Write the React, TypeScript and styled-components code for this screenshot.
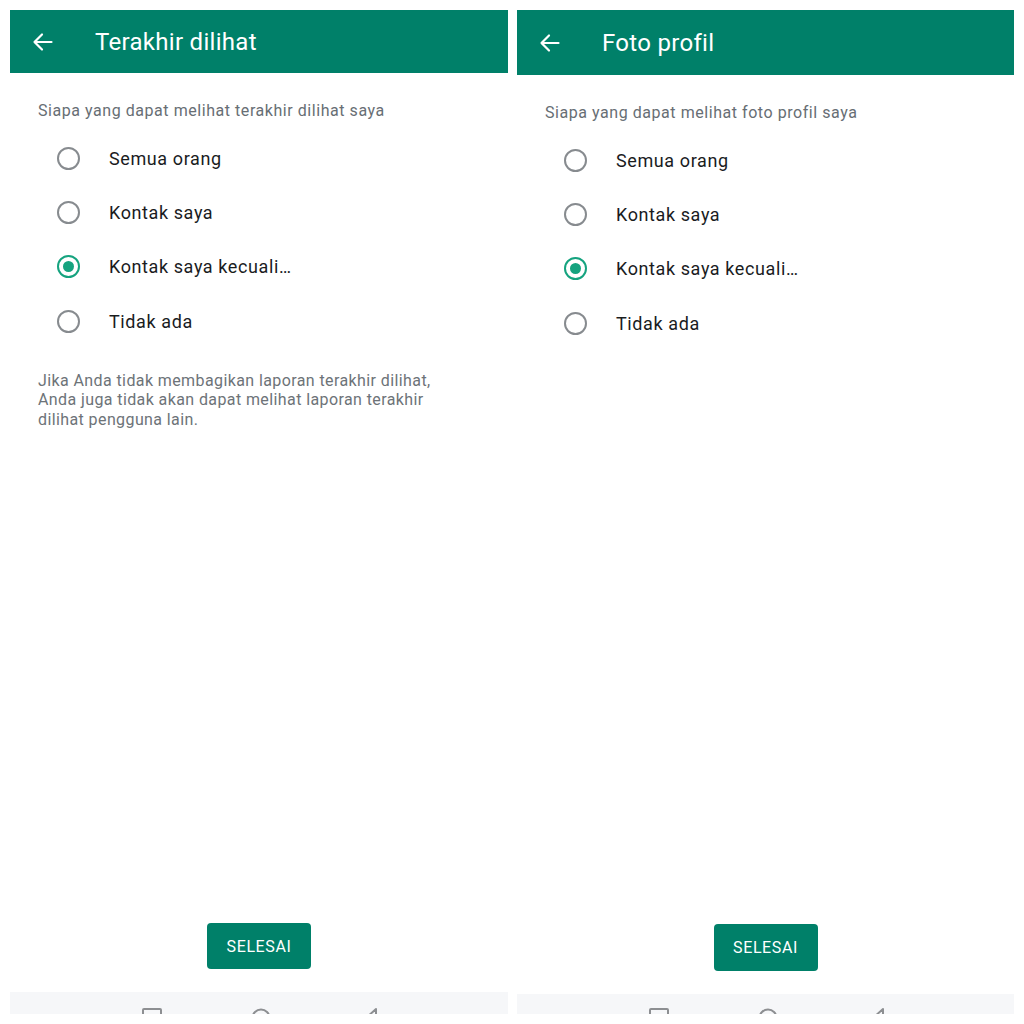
import React from "react";
import styled, { createGlobalStyle } from "styled-components";

const GlobalStyle = createGlobalStyle`
  html, body { margin: 0; padding: 0; background: #ffffff; }
  body { font-family: Roboto, "Noto Sans", Arial, sans-serif; }
  * { box-sizing: border-box; }
`;

const Page = styled.div`
  width: 1024px;
  height: 1024px;
  padding: 10px;
  display: grid;
  grid-template-columns: 498px 497px;
  column-gap: 9px;
  background: #ffffff;
`;

const Panel = styled.section`
  display: flex;
  flex-direction: column;
  height: 100%;
  background: #ffffff;
  overflow: hidden;
`;

const Header = styled.header<{ $h: number }>`
  height: ${(p) => p.$h}px;
  flex: none;
  background: #008069;
  display: flex;
  align-items: center;
  padding-left: 22px;
  gap: 42px;
  color: #ffffff;
`;

const Title = styled.h1`
  margin: 0;
  font-size: 24px;
  font-weight: 400;
  letter-spacing: 0.3px;
  color: #ffffff;
`;

const Body = styled.div<{ $top: number }>`
  flex: 1;
  padding-top: ${(p) => p.$top}px;
  display: flex;
  flex-direction: column;
`;

const Subtitle = styled.p`
  margin: 0;
  padding-left: 28px;
  font-size: 16px;
  line-height: 20px;
  letter-spacing: 0.55px;
  color: #676e74;
`;

const RadioList = styled.div`
  margin-top: 10px;
  display: flex;
  flex-direction: column;
`;

const Row = styled.div`
  height: 54.4px;
  display: flex;
  align-items: center;
  padding-left: 47px;
  gap: 29px;
`;

const Circle = styled.span<{ $on: boolean }>`
  width: 23px;
  height: 23px;
  border-radius: 50%;
  border: 2px solid ${(p) => (p.$on ? "#15a37f" : "#878b8f")};
  display: flex;
  align-items: center;
  justify-content: center;
  flex: none;
`;

const Dot = styled.span`
  width: 11px;
  height: 11px;
  border-radius: 50%;
  background: #15a37f;
`;

const Label = styled.span`
  font-size: 18px;
  color: #1a1c1e;
  letter-spacing: 0.6px;
`;

const Note = styled.p`
  margin: 22px 0 0;
  padding-left: 28px;
  font-size: 16px;
  line-height: 19.5px;
  letter-spacing: 0.4px;
  color: #6d7378;
`;

const Footer = styled.div<{ $gap: number }>`
  display: flex;
  justify-content: center;
  padding-bottom: ${(p) => p.$gap}px;
`;

const Button = styled.button<{ $h: number }>`
  width: 104px;
  height: ${(p) => p.$h}px;
  border: none;
  border-radius: 4px;
  background: #008069;
  color: #ffffff;
  font-family: Roboto, "Noto Sans", Arial, sans-serif;
  font-size: 16px;
  font-weight: 400;
  letter-spacing: 0.6px;
  padding: 0;
`;

const NavBar = styled.div<{ $h: number }>`
  height: ${(p) => p.$h}px;
  flex: none;
  background: #f6f7f9;
  position: relative;
  overflow: hidden;
`;

const NavIcon = styled.svg<{ $x: number }>`
  position: absolute;
  left: ${(p) => p.$x}px;
  bottom: -14px;
`;

const BackArrow = () => (
  <svg width="21" height="20" viewBox="0 0 21 20" fill="none">
    <path d="M19.5 10H2.5M10 2.5L2.5 10L10 17.5" stroke="#ffffff" strokeWidth="2.2" strokeLinecap="round" strokeLinejoin="round" />
  </svg>
);

type Cfg = {
  title: string;
  subtitle: string;
  note?: string[];
  headerH: number;
  bodyTop: number;
  btnH: number;
  btnGap: number;
  navH: number;
};

const options = ["Semua orang", "Kontak saya", "Kontak saya kecuali…", "Tidak ada"];

const Screen = ({ c }: { c: Cfg }) => (
  <Panel>
    <Header $h={c.headerH}>
      <BackArrow />
      <Title>{c.title}</Title>
    </Header>
    <Body $top={c.bodyTop}>
      <Subtitle>{c.subtitle}</Subtitle>
      <RadioList>
        {options.map((o, i) => (
          <Row key={o}>
            <Circle $on={i === 2}>{i === 2 && <Dot />}</Circle>
            <Label>{o}</Label>
          </Row>
        ))}
      </RadioList>
      {c.note && (
        <Note>
          {c.note.map((l, i) => (
            <React.Fragment key={i}>
              {l}
              {i < c.note!.length - 1 && <br />}
            </React.Fragment>
          ))}
        </Note>
      )}
    </Body>
    <Footer $gap={c.btnGap}>
      <Button $h={c.btnH}>SELESAI</Button>
    </Footer>
    <NavBar $h={c.navH}>
      <NavIcon $x={132} width="20" height="20" viewBox="0 0 20 20">
        <rect x="1" y="1" width="18" height="18" rx="1" fill="none" stroke="#8d8f92" strokeWidth="2" />
      </NavIcon>
      <NavIcon $x={241} width="20" height="20" viewBox="0 0 20 20">
        <circle cx="10" cy="10" r="8.5" fill="none" stroke="#8d8f92" strokeWidth="2" />
      </NavIcon>
      <NavIcon $x={352} width="20" height="20" viewBox="0 0 20 20">
        <path d="M14 1L4 10L14 19Z" fill="none" stroke="#8d8f92" strokeWidth="2" strokeLinejoin="round" />
      </NavIcon>
    </NavBar>
  </Panel>
);

const left: Cfg = {
  title: "Terakhir dilihat",
  subtitle: "Siapa yang dapat melihat terakhir dilihat saya",
  note: [
    "Jika Anda tidak membagikan laporan terakhir dilihat,",
    "Anda juga tidak akan dapat melihat laporan terakhir",
    "dilihat pengguna lain.",
  ],
  headerH: 63,
  bodyTop: 28,
  btnH: 46,
  btnGap: 23,
  navH: 22,
};

const right: Cfg = {
  title: "Foto profil",
  subtitle: "Siapa yang dapat melihat foto profil saya",
  headerH: 65,
  bodyTop: 28,
  btnH: 47,
  btnGap: 23,
  navH: 20,
};

export default function App() {
  return (
    <>
      <GlobalStyle />
      <Page>
        <Screen c={left} />
        <Screen c={right} />
      </Page>
    </>
  );
}
